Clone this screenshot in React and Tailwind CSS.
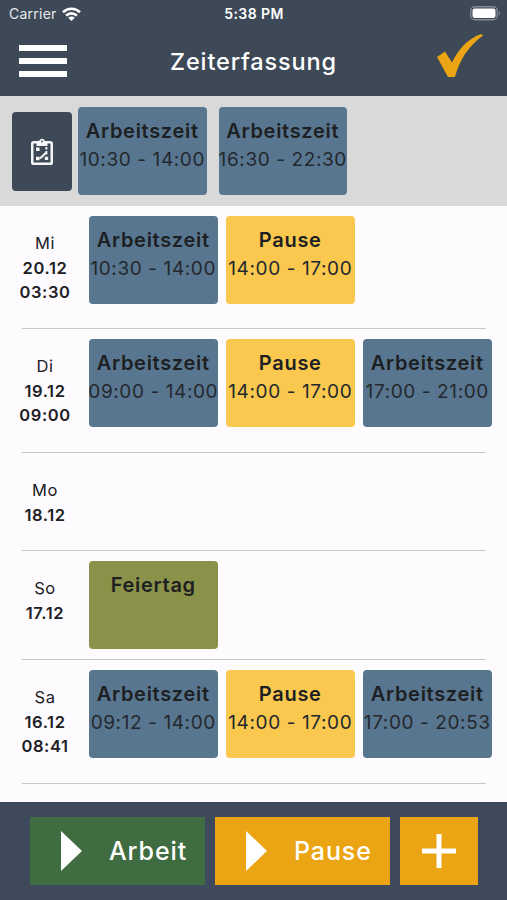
import React from "react";
import clsx from "clsx";

const colors = {
  work: "bg-[#58768f]",
  pause: "bg-[#fac84f]",
  holiday: "bg-[#8a9148]",
};

const current = [
  { type: "work", title: "Arbeitszeit", time: "10:30 - 14:00" },
  { type: "work", title: "Arbeitszeit", time: "16:30 - 22:30" },
];

const days = [
  {
    day: "Mi",
    date: "20.12",
    total: "03:30",
    height: "h-[123px]",
    entries: [
      { type: "work", title: "Arbeitszeit", time: "10:30 - 14:00" },
      { type: "pause", title: "Pause", time: "14:00 - 17:00" },
    ],
  },
  {
    day: "Di",
    date: "19.12",
    total: "09:00",
    height: "h-[124px]",
    entries: [
      { type: "work", title: "Arbeitszeit", time: "09:00 - 14:00" },
      { type: "pause", title: "Pause", time: "14:00 - 17:00" },
      { type: "work", title: "Arbeitszeit", time: "17:00 - 21:00" },
    ],
  },
  { day: "Mo", date: "18.12", height: "h-[98px]", entries: [] },
  {
    day: "So",
    date: "17.12",
    height: "h-[109px]",
    entries: [{ type: "holiday", title: "Feiertag" }],
  },
  {
    day: "Sa",
    date: "16.12",
    total: "08:41",
    height: "h-[124px]",
    entries: [
      { type: "work", title: "Arbeitszeit", time: "09:12 - 14:00" },
      { type: "pause", title: "Pause", time: "14:00 - 17:00" },
      { type: "work", title: "Arbeitszeit", time: "17:00 - 20:53" },
    ],
  },
];

const Entry = ({ type, title, time }) => (
  <div
    className={clsx(
      "w-[128.5px] h-[88px] shrink-0 rounded-[4px] pt-[10px] text-center whitespace-nowrap text-[#1d1f22]",
      colors[type]
    )}
  >
    <div className="text-[20px] leading-[28px] font-semibold tracking-[0.7px]">
      {title}
    </div>
    {time && (
      <div className="-mx-2 text-[19px] leading-[29px] tracking-[0.6px] text-[#24282d]">
        {time}
      </div>
    )}
  </div>
);

const DayRow = ({ day, date, total, height, entries }) => (
  <div className={clsx("flex flex-col", height)}>
    <div className="flex flex-1">
      <div className="w-[89px] shrink-0 pl-px pt-[25px] text-center text-[16.5px] leading-[24.5px] tracking-[0.6px] text-[#202024]">
        <div>{day}</div>
        <div className="font-semibold">{date}</div>
        {total && <div className="font-semibold">{total}</div>}
      </div>
      <div className="flex gap-[8.5px] pt-[10px]">
        {entries.map((entry, i) => (
          <Entry key={i} {...entry} />
        ))}
      </div>
    </div>
    <div className="ml-[22px] mr-[21px] h-px bg-[#c9c6ca]" />
  </div>
);

const PlayButton = ({ label, className }) => (
  <button
    className={clsx(
      "flex h-[68px] w-[175px] items-center pl-[31px] text-[25px] font-medium tracking-[0.9px] text-white",
      className
    )}
  >
    <svg width="21" height="40" viewBox="0 0 21 40" fill="currentColor">
      <path d="M0 0L21 20L0 40Z" />
    </svg>
    <span className="ml-[27px] pt-[2px]">{label}</span>
  </button>
);

const App = () => {
  return (
    <div className="flex h-[900px] w-[507px] flex-col overflow-hidden bg-[#fefbff] font-['Inter',sans-serif]">
      <header className="h-[96px] shrink-0 bg-[#3d4956] text-white">
        {/* Status bar */}
        <div className="grid h-[27px] grid-cols-3 items-center pl-[9px] pr-[6px] text-[14px]">
          <div className="flex items-center gap-[5px] tracking-[0.25px] text-[#e5e9ec]">
            <span>Carrier</span>
            <svg width="19" height="14" viewBox="0 0 19 14" fill="none" stroke="#fff" strokeWidth="2.6">
              <path d="M1 5.2C5.8 0.5 13.2 0.5 18 5.2" />
              <path d="M4 8.6C7.2 5.6 11.8 5.6 15 8.6" />
              <path d="M9.5 14L6.2 10.8C8 9.2 11 9.2 12.8 10.8Z" fill="#fff" stroke="none" />
            </svg>
          </div>
          <div className="-ml-[2px] text-center font-semibold tracking-[0.4px]">5:38 PM</div>
          <svg className="justify-self-end" width="31" height="15" viewBox="0 0 31 15">
            <rect x="0.75" y="0.75" width="26.5" height="13" rx="4" fill="none" stroke="#828b94" strokeWidth="1.3" />
            <rect x="2.5" y="2.5" width="23" height="9.5" rx="2.2" fill="#fff" />
            <path d="M28.8 5.2C30.6 5.8 30.6 8.7 28.8 9.3Z" fill="#828b94" />
          </svg>
        </div>
        {/* Title bar */}
        <div className="flex h-[68px] items-center justify-between pl-[19px] pr-[24px]">
          <div className="flex w-[48px] flex-col gap-[7px]">
            <div className="h-[6px] bg-white" />
            <div className="h-[6px] bg-white" />
            <div className="h-[6px] bg-white" />
          </div>
          <h1 className="pl-[3px] pt-[2px] text-[23.5px] font-medium tracking-[0.85px]">Zeiterfassung</h1>
          <svg className="mb-[11px]" width="46" height="44" viewBox="0 0 46 44" fill="#eba414">
            <path d="M0 23L8 17.5L15 28.5C21 16 31 4 44.5 0L46 1.5C31 13 23 25 18 43H11Z" />
          </svg>
        </div>
      </header>

      <section className="flex h-[110px] shrink-0 bg-[#d9d9d9] pl-[12px] pt-[11px]">
        <div className="mt-[5px] flex h-[79px] w-[60px] items-center justify-center rounded-[4px] bg-[#3d4956]">
          <svg width="22" height="27" viewBox="0 0 22 27" fill="none" stroke="#f4f5f6">
            <rect x="1.2" y="4.2" width="19.6" height="21.6" rx="1.5" strokeWidth="2.6" />
            <path d="M5.5 3.3H8.1C8.3 -0.2 13.7 -0.2 13.9 3.3H16.5V8H5.5Z" fill="#f4f5f6" stroke="none" />
            <circle cx="11" cy="3.4" r="0.9" fill="#3d4956" stroke="none" />
            <path d="M5 9.5h3.6v3.6H5zM5 18.7h3.6v3.6H5zM13.8 18.7h3.4v3.4h-3.4z" fill="#f4f5f6" stroke="none" />
            <path d="M9 20.5L15.2 14.5M15.4 9v2.4M15.4 13v3.4" strokeWidth="2" />
          </svg>
        </div>
        <div className="ml-[6px] flex gap-[12px]">
          {current.map((entry, i) => (
            <Entry key={i} {...entry} />
          ))}
        </div>
      </section>

      <main className="flex-1">
        {days.map((d) => (
          <DayRow key={d.date} {...d} />
        ))}
      </main>

      <footer className="flex h-[98px] shrink-0 gap-[10px] bg-[#3e495b] pl-[30px] pt-[15px]">
        <PlayButton label="Arbeit" className="bg-[#406c41]" />
        <PlayButton label="Pause" className="bg-[#eba414]" />
        <button className="flex h-[68px] w-[78px] items-center justify-center bg-[#eba414]">
          <svg width="34" height="34" viewBox="0 0 34 34" stroke="#fff" strokeWidth="5">
            <path d="M17 0V34M0 17H34" />
          </svg>
        </button>
      </footer>
    </div>
  );
};

export default App;
